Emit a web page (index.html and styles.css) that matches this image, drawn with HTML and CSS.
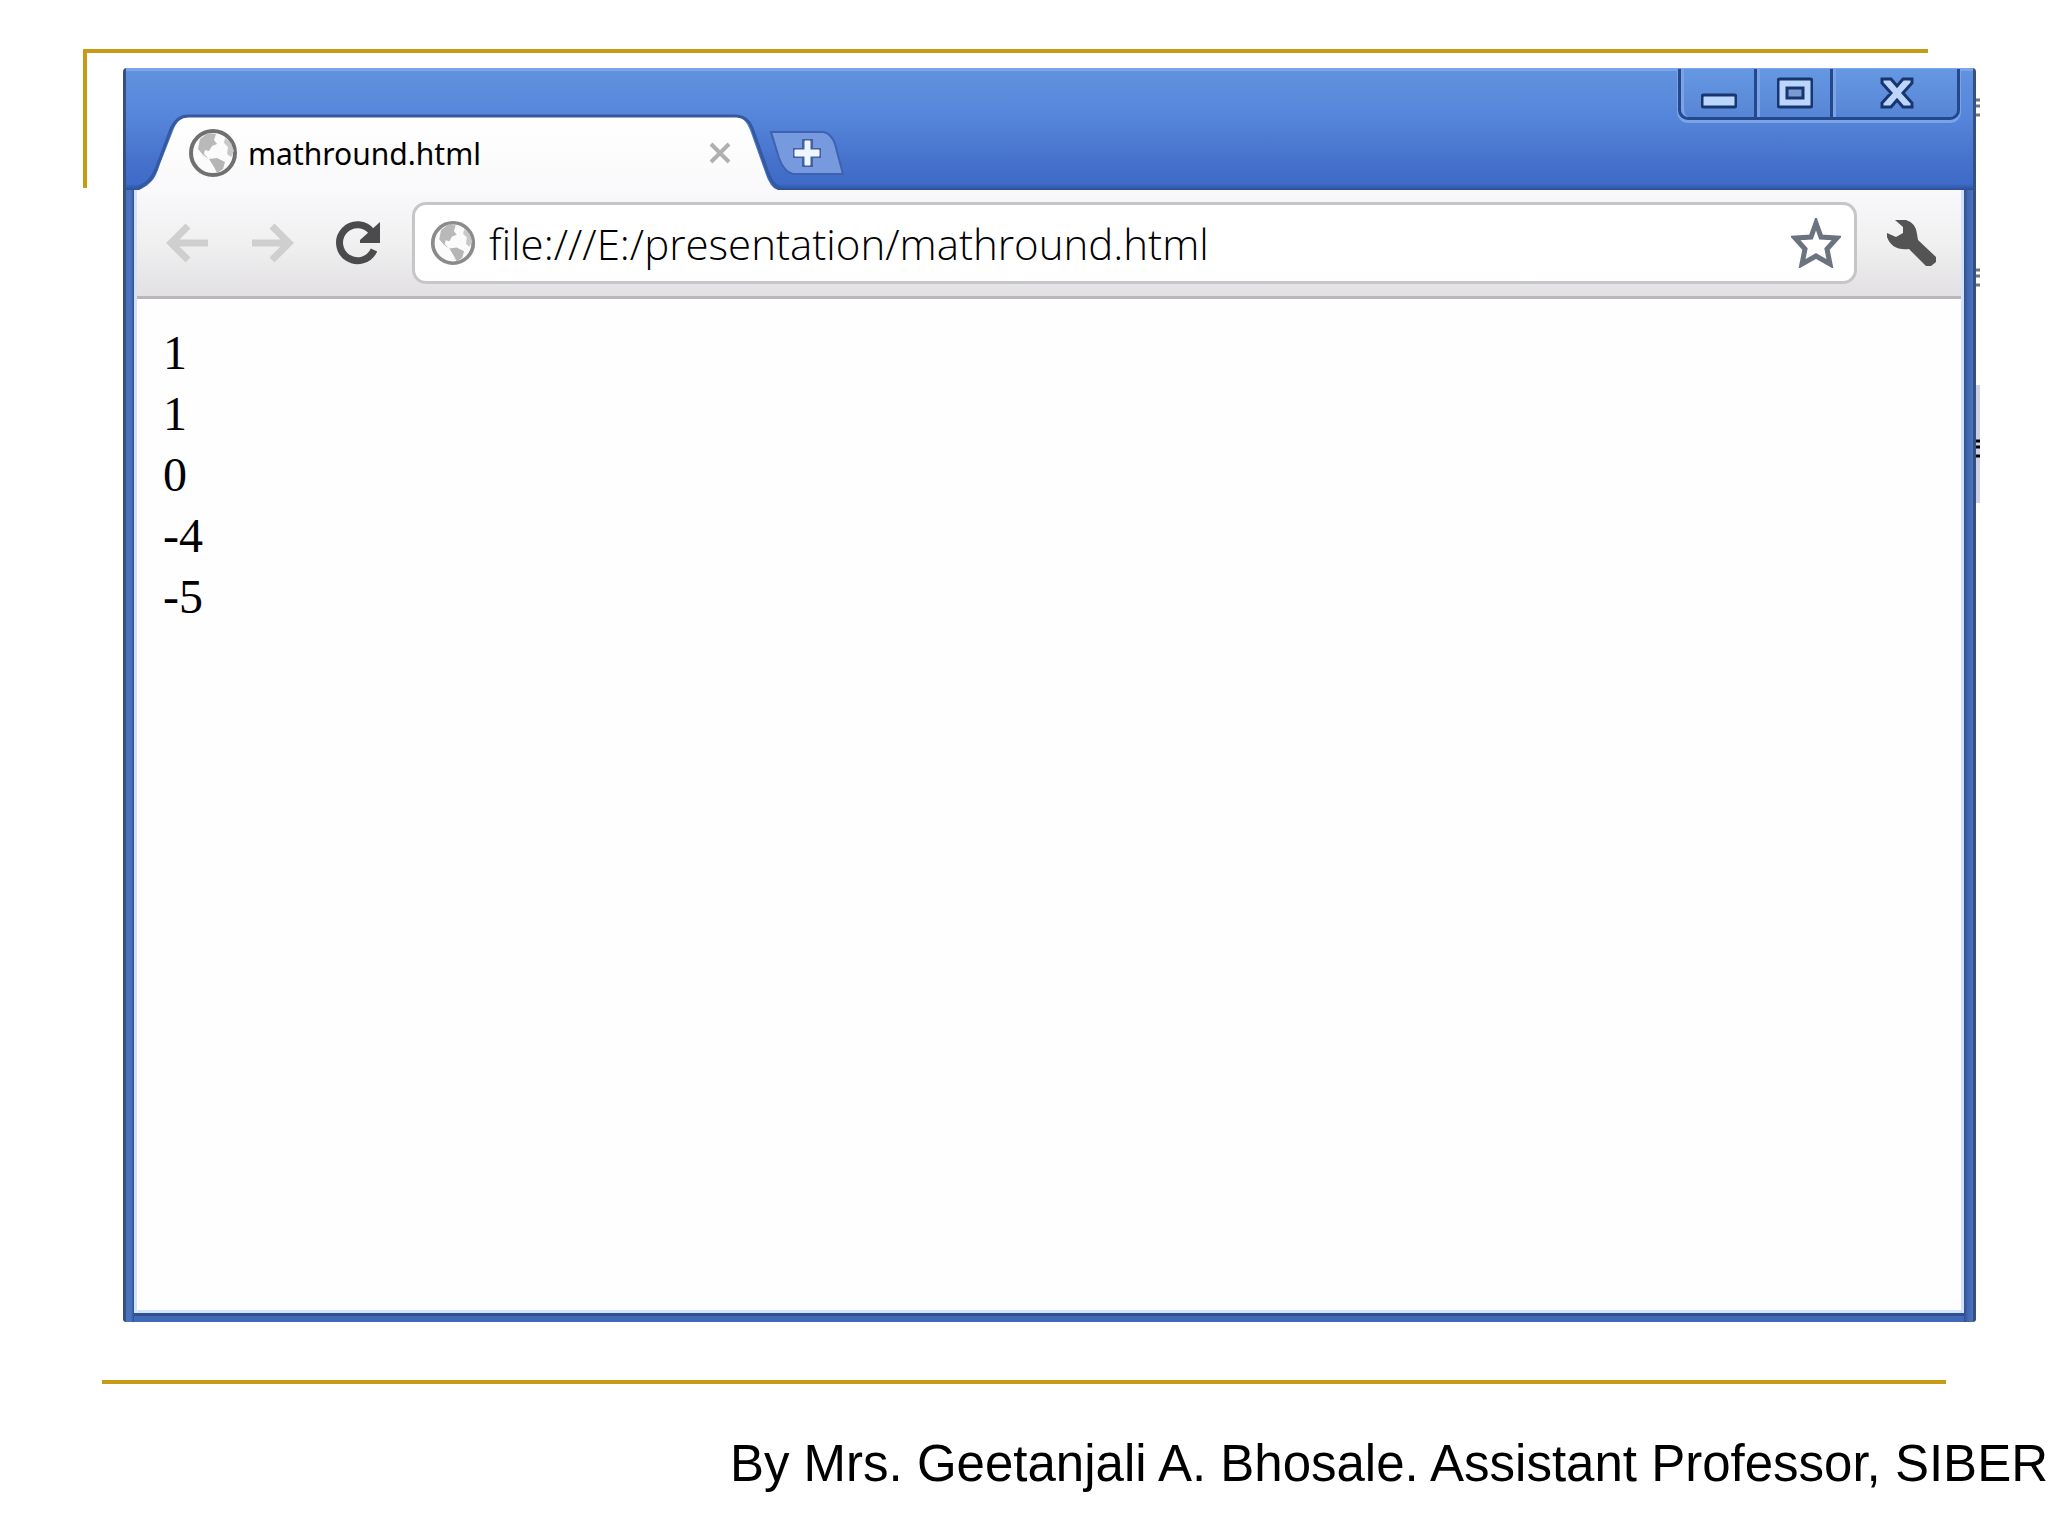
FILE: index.html
```html
<!DOCTYPE html>
<html lang="en">
<head>
    <meta charset="UTF-8" />
    <meta name="viewport" content="width=device-width, initial-scale=1.0" />
    <title>mathround.html</title>
    <link rel="stylesheet" href="styles.css">
</head>
<body>
<svg class="defs" aria-hidden="true">
    <symbol id="globe" viewBox="0 0 50 50">
        <circle cx="25" cy="25" r="22" fill="#fbfbfb" stroke="currentColor" stroke-width="4" />
        <path fill="#b9b9b9" d="M12 11 L20 5 L28 6 L26 12 L29 16 L24 18 L21 23 L17 22 L16 26 L21 31 L15 27 L10 21 Z" />
        <path fill="#b5b5b5" d="M21 31 L29 30 L37 34 L35 41 L29 45 L26 39 Z" />
        <path fill="#c8c8c8" d="M37 10 L43 15 L46 23 L43 29 L39 26 L40 19 L36 15 Z" />
    </symbol>
</svg>
<main class="slide">
    <div class="corner"></div>
    <div class="stage">
        <section class="window">
            <header class="titlebar">
                <div class="tab">
                    <svg class="tab-shape" viewBox="0 0 650 78" preserveAspectRatio="none" aria-hidden="true">
                        <defs>
                            <linearGradient id="tabFill" x1="0" y1="0" x2="0" y2="1">
                                <stop offset="0" stop-color="#ffffff" />
                                <stop offset="1" stop-color="#f9f9fb" />
                            </linearGradient>
                        </defs>
                        <path d="M8 78 C20 72 24 68 29 52 L42 19 Q47 5 57 5 L606 5 Q614 5 619 18 L634 60 Q639 76 647 78 Z" fill="url(#tabFill)" />
                        <path d="M4 77 C18 71 22 66 27 52 L40 17 Q46 4 57 4 L606 4 Q617 5 621 16 L636 58 Q641 74 650 76" fill="none" stroke="#35599f" stroke-width="3" />
                    </svg>
                    <svg class="tab-globe" aria-hidden="true"><use href="#globe" /></svg>
                    <span class="tab-title">mathround.html</span>
                    <button class="tab-close" aria-label="Close tab">
                        <svg viewBox="0 0 22 22"><path d="M2 2 L20 20 M20 2 L2 20" stroke="#b0b0b0" stroke-width="4" /></svg>
                    </button>
                </div>
                <button class="new-tab" aria-label="New tab">
                    <svg viewBox="0 0 76 46">
                        <path d="M2 2 L54 2 Q62 3 66 14 L74 44 L24 44 Q15 42 10 28 Z" fill="#7799de" stroke="#3d62b0" stroke-width="2" />
                        <path d="M33 9 H44 V18 H52 V28 H44 V37 H33 V28 H24 V18 H33 Z" fill="#44609f" />
                        <path d="M36 11 H41 V20 H50 V26 H41 V35 H36 V26 H26 V20 H36 Z" fill="#edf6ff" stroke="#edf6ff" />
                    </svg>
                </button>
                <div class="controls">
                    <button class="control" aria-label="Minimize">
                        <svg viewBox="0 0 36 32"><rect x="1" y="18" width="34" height="12" rx="2" fill="#bcd6fb" stroke="#17366f" stroke-width="3" /></svg>
                    </button>
                    <button class="control" aria-label="Maximize">
                        <svg viewBox="0 0 36 32">
                            <rect x="1" y="2" width="34" height="28" rx="2" fill="#bcd6fb" stroke="#17366f" stroke-width="3" />
                            <rect x="10" y="11" width="16" height="10" fill="#7b9ad2" stroke="#17366f" stroke-width="3" />
                        </svg>
                    </button>
                    <button class="control control-close" aria-label="Close">
                        <svg viewBox="0 0 36 32"><path d="M3 2 H12 L18 9 L24 2 H33 L33 6 L24 16 L33 26 V30 H24 L18 23 L12 30 H3 V26 L12 16 L3 6 Z" fill="#bcd6fb" stroke="#17366f" stroke-width="3" /></svg>
                    </button>
                </div>
            </header>
            <div class="inner">
                <nav class="toolbar">
                    <button class="tool" aria-label="Back">
                        <svg viewBox="0 0 44 44"><path d="M22 5 L5 22 L22 39 M5 22 H42" fill="none" stroke="#cfcfd0" stroke-width="7" /></svg>
                    </button>
                    <button class="tool" aria-label="Forward">
                        <svg viewBox="0 0 44 44"><path d="M21 5 L38 22 L21 39 M38 22 H1" fill="none" stroke="#cfcfd0" stroke-width="7" /></svg>
                    </button>
                    <button class="tool" aria-label="Reload">
                        <svg viewBox="0 0 44 44">
                            <path d="M36 11 A18 18 0 1 0 38 29" fill="none" stroke="#4b4b4d" stroke-width="7" />
                            <path d="M44 1 V22 H24 V19 Z" fill="#4b4b4d" />
                        </svg>
                    </button>
                    <div class="omnibox">
                        <svg class="omnibox-globe" aria-hidden="true"><use href="#globe" /></svg>
                        <input class="url" type="text" aria-label="Address" value="file:///E:/presentation/mathround.html" />
                        <button class="star" aria-label="Bookmark">
                            <svg viewBox="0 0 50 50"><path d="M25 5 L30 19 L46 20 L36 31 L39 46 L25 38 L11 46 L14 31 L4 20 L20 19 Z" fill="#fff" stroke="#6b7280" stroke-width="5" /></svg>
                        </button>
                    </div>
                    <button class="wrench" aria-label="Settings">
                        <svg viewBox="0 0 50 48"><path d="M9 1 H20 Q30 4 31 15 L32 21 L50 38 V43 L45 47 H40 L23 30 Q6 32 1 18 L1 14 L10 18 L17 14 V8 Z" fill="#555455" /></svg>
                    </button>
                </nav>
                <div class="page">
                    1<br>
                    1<br>
                    0<br>
                    -4<br>
                    -5
                </div>
            </div>
        </section>
        <!-- sliver of the text lines behind the window -->
        <svg class="behind" viewBox="0 0 4 500" aria-hidden="true">
            <path d="M0 317 H4 V435 H0 Z" fill="#cdd0e4" />
            <path d="M0 32 H4 M0 38 H4 M0 47 H4 M0 202 H4 M0 208 H4 M0 217 H4" stroke="#707580" stroke-width="3" />
            <path d="M0 373 H4 M0 379 H4 M0 388 H4" stroke="#000" stroke-width="3" />
        </svg>
    </div>
    <footer class="footer">
        <p class="credit">By Mrs. Geetanjali A. Bhosale. Assistant Professor, SIBER</p>
    </footer>
</main>
</body>
</html>
```

FILE: styles.css
```css
* {
    box-sizing: border-box;
}
body {
    margin: 0;
    background-color: #fff;
    color: #000;
    font-family: "Liberation Sans", Arial, sans-serif;
    overflow-x: hidden;
}
button {
    padding: 0;
    border: 0;
    background: none;
}
svg {
    display: block;
}
button svg {
    width: 100%;
    height: 100%;
}
.defs {
    position: absolute;
    width: 0;
    height: 0;
}
.slide {
    display: flex;
    flex-direction: column;
    min-height: 100vh;
    padding-top: 49px;
}
.corner {
    height: 139px;
    margin: 0 120px 0 83px;
    border-top: 4px solid #c79a17;
    border-left: 4px solid #c79a17;
}
.stage {
    display: flex;
    flex: 1;
    margin: -120px 68px 0 123px; /* window sits over the corner lines */
}
.window {
    display: flex;
    flex: 1;
    flex-direction: column;
    border: solid #36507f;
    border-width: 0 3px;
    border-radius: 4px 4px 3px 3px;
    background: linear-gradient(to right, #4a73bd 0, #4a73bd 5px, #2f4f93 8px, #2f4f93 calc(100% - 9px), #4268ae calc(100% - 5px), #4a73bd 100%);
}
.behind {
    width: 4px;
    height: 500px;
}

/* title bar */
.titlebar {
    display: flex;
    height: 122px;
    padding-left: 5px;
    border-top: 3px solid #79a6e9;
    background: linear-gradient(#6092de, #5585da 40%, #4672cc 75%, #3e6bc8 95%, #2c4f98);
}
.tab {
    position: relative;
    display: flex;
    align-items: center;
    width: 650px;
    height: 78px;
    margin-top: 41px;
    padding: 4px 50px 0 57px;
}
.tab-shape {
    position: absolute;
    inset: 0;
    width: 100%;
    height: 100%;
}
.tab-globe {
    position: relative;
    width: 50px;
    height: 50px;
    color: #707070;
}
.tab-title {
    position: relative;
    flex: 1;
    margin-left: 10px;
    font-family: "Noto Sans", sans-serif;
    font-size: 30px;
}
.tab-close {
    position: relative;
    width: 22px;
    height: 22px;
}
.new-tab {
    width: 76px;
    height: 46px;
    margin-top: 59px;
    margin-left: -12px;
}
.controls {
    display: flex;
    height: 51px;
    margin-top: -2px;
    margin-left: auto;
    margin-right: 13px;
    border: solid #23488d;
    border-width: 0 3px 3px;
    border-radius: 0 0 10px 10px;
    box-shadow: 0 2px 0 1px #7ba3e6;
}
.control {
    display: flex;
    align-items: center;
    justify-content: center;
    width: 76px;
    border-left: 3px solid #7ba3e6;
    border-right: 3px solid #23488d;
    background: linear-gradient(#6598e3, #5785d5);
}
.control:first-child {
    border-bottom-left-radius: 8px;
}
.control-close {
    width: 124px;
    border-right: 0;
    border-bottom-right-radius: 8px;
}
.control svg {
    width: 36px;
    height: 32px;
}

/* toolbar and page */
.inner {
    display: flex;
    flex: 1;
    flex-direction: column;
    margin: 0 9px 9px 8px;
    border: solid #d3e2fa;
    border-width: 0 3px 3px;
    box-shadow: 0 3px 0 #2f4f93, 0 9px 0 #4269b8;
    background-color: #fefefe;
}
.toolbar {
    display: flex;
    align-items: center;
    height: 109px;
    padding: 0 25px 0 29px;
    border-bottom: 3px solid #b9b7b9;
    background: linear-gradient(#f9f9fb, #f0f0f1 50%, #e2e0e2);
}
.tool {
    width: 44px;
    height: 44px;
    margin-right: 41px;
}
.omnibox {
    display: flex;
    flex: 1;
    align-items: center;
    height: 82px;
    margin-left: -9px;
    padding: 0 13px 0 15px;
    border: 3px solid #c7c5c7;
    border-radius: 14px;
    background-color: #fff;
}
.omnibox-globe {
    width: 46px;
    height: 46px;
    color: #8b8b8b;
}
.url {
    flex: 1;
    min-width: 0;
    height: 70px;
    margin-left: 13px;
    padding: 0;
    border: 0;
    outline: 0;
    background: none;
    color: #000;
    font-family: "Open Sans", sans-serif;
    font-size: 42px;
    font-weight: 300;
}
.star {
    width: 50px;
    height: 50px;
}
.wrench {
    width: 50px;
    height: 48px;
    margin-left: 29px;
}
.page {
    padding: 23px 26px;
    font-family: "Liberation Serif", "Times New Roman", serif;
    font-size: 48px;
    line-height: 61px;
}

/* footer */
.footer {
    margin-top: 58px;
}
.footer::before {
    content: "";
    display: block;
    height: 4px;
    margin: 0 102px;
    background-color: #c79a17;
}
.credit {
    margin: 50px 0 42px;
    text-align: right;
    white-space: nowrap;
    font-size: 51px;
    line-height: 60px;
}
```
